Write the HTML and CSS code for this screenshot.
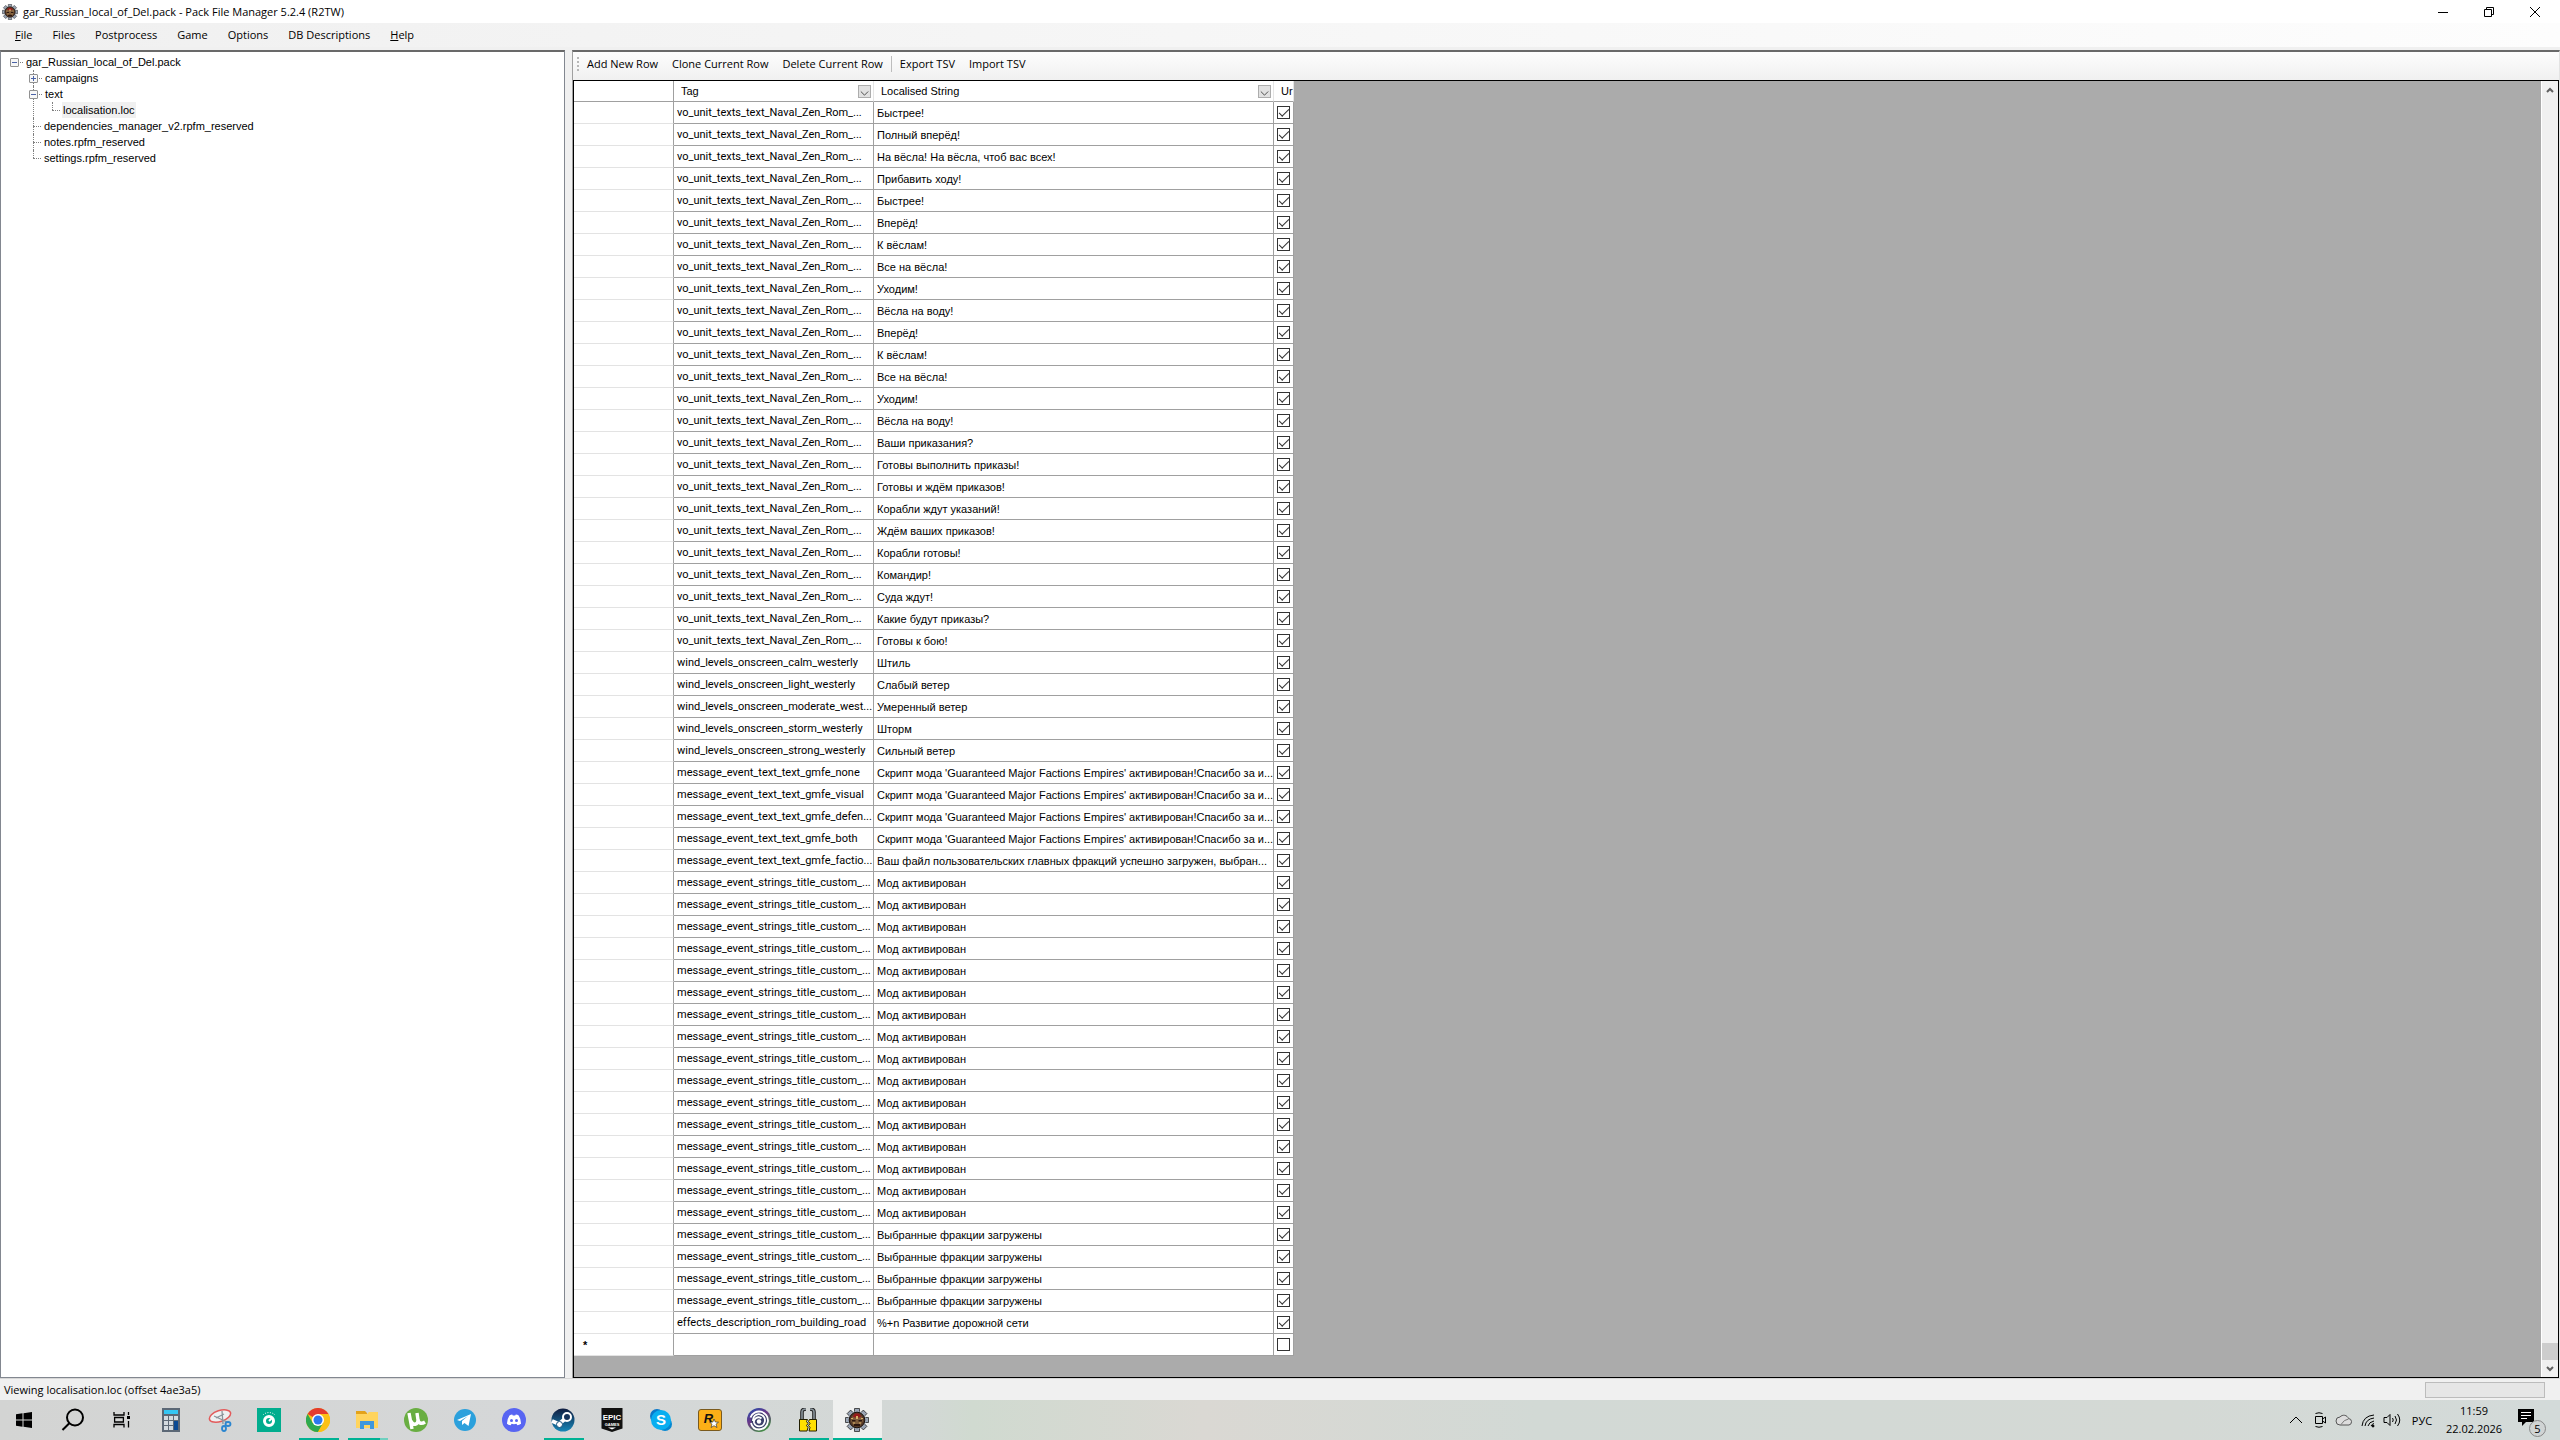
FILE: index.html
```html
<!DOCTYPE html>
<html lang="ru">
<head>
    <meta charset="UTF-8">
    <meta name="viewport" content="width=device-width, initial-scale=1.0">
    <title>Pack File Manager</title>
    <link rel="stylesheet" href="styles.css">
</head>
<body>

<!-- shared icons -->
<svg class="defs" width="0" height="0">
    <symbol id="gear" viewBox="0 0 24 24">
        <g fill="#9aa5b5" stroke="#2a2a2a" stroke-width=".8">
            <path d="M9.500.5h5v4h-5zM9.500 19.500h5v4h-5zM.5 9.500h4v5h-4zM19.500 9.500h4v5h-4z"/>
            <path d="M9.500.5h5v4h-5zM9.500 19.500h5v4h-5zM.5 9.500h4v5h-4zM19.500 9.500h4v5h-4z" transform="rotate(45 12 12)"/>
        </g>
        <circle cx="12" cy="12" r="9" fill="#9aa5b5"/>
        <circle cx="12" cy="12" r="7.800" fill="#553a28" stroke="#1c120c"/>
        <path d="M6 13l1.500-5L12 6l4.500 2 1.500 5-3 5H9z" fill="#7d5c3b"/>
        <path d="M7.500 8.500L10 5.500h4l2.500 3-2.500 1h-4z" fill="#961b1b"/>
        <path d="M7 12h3.500v1.500H7zM13.500 12H17v1.500h-3.500zM9 16h6v2H9z" fill="#2c170f"/>
        <path d="M11 8h2v3h-2zM6 10h2v1H6zM16 10h2v1h-2zM8 14.500h2v1H8zM14 14.500h2v1h-2z" fill="#d9b26a"/>
    </symbol>
</svg>

<div class="window">
    <header class="titlebar">
        <svg class="app-icon"><use href="#gear"/></svg>
        <span class="caption">gar_Russian_local_of_Del.pack - Pack File Manager 5.2.4 (R2TW)</span>
        <button class="win-btn" aria-label="Minimize"><svg viewBox="0 0 10 10"><path d="M0 5.500h10"/></svg></button>
        <button class="win-btn" aria-label="Restore"><svg viewBox="0 0 10 10"><path d="M.5 2.500h7v7h-7zM2.500 2.500v-2h7v7h-2"/></svg></button>
        <button class="win-btn" aria-label="Close"><svg viewBox="0 0 10 10"><path d="M0 0l10 10M10 0L0 10"/></svg></button>
    </header>

    <nav class="menu">
        <button><u>F</u>ile</button>
        <button>Files</button>
        <button>Postprocess</button>
        <button>Game</button>
        <button>Options</button>
        <button>DB Descriptions</button>
        <button><u>H</u>elp</button>
    </nav>

    <main class="panes">
        <aside class="tree">
            <ul class="root">
                <li><div class="node"><button class="toggle" aria-label="Collapse"></button><span>gar_Russian_local_of_Del.pack</span></div>
                    <ul>
                        <li><div class="node"><button class="toggle plus" aria-label="Expand"></button><span>campaigns</span></div></li>
                        <li><div class="node"><button class="toggle" aria-label="Collapse"></button><span>text</span></div>
                            <ul>
                                <li><div class="node leaf"><span class="selected">localisation.loc</span></div></li>
                            </ul>
                        </li>
                        <li><div class="node leaf"><span>dependencies_manager_v2.rpfm_reserved</span></div></li>
                        <li><div class="node leaf"><span>notes.rpfm_reserved</span></div></li>
                        <li><div class="node leaf"><span>settings.rpfm_reserved</span></div></li>
                    </ul>
                </li>
            </ul>
        </aside>

        <section class="editor">
            <div class="toolbar">
                <i class="grip"></i>
                <button>Add New Row</button>
                <button>Clone Current Row</button>
                <button>Delete Current Row</button>
                <i class="separator"></i>
                <button>Export TSV</button>
                <button>Import TSV</button>
            </div>
            <div class="grid">
                <div class="grid-area">
                    <table>
                        <colgroup><col class="col-head"><col class="col-tag"><col class="col-text"><col class="col-check"></colgroup>
                        <thead>
                            <tr>
                                <th></th>
                                <th><div class="th">Tag<button class="filter" aria-label="Filter Tag"><svg viewBox="0 0 12 12"><path d="M2 6l4 4 4-4"/></svg></button></div></th>
                                <th><div class="th">Localised String<button class="filter" aria-label="Filter Localised String"><svg viewBox="0 0 12 12"><path d="M2 6l4 4 4-4"/></svg></button></div></th>
                                <th><div class="th">Ur</div></th>
                            </tr>
                        </thead>
                        <tbody id="rows"></tbody>
                    </table>
                </div>
                <div class="scrollbar">
                    <button aria-label="Scroll up"><svg viewBox="0 0 8 6"><path d="M1 5l3-3 3 3"/></svg></button>
                    <div class="thumb"></div>
                    <button aria-label="Scroll down"><svg viewBox="0 0 8 6"><path d="M1 1l3 3 3-3"/></svg></button>
                </div>
            </div>
        </section>
    </main>

    <footer class="status">
        <span>Viewing localisation.loc (offset 4ae3a5)</span>
        <div class="progress"></div>
    </footer>
</div>

<div class="taskbar">
    <button class="task" aria-label="Start"><svg viewBox="0 0 24 24"><path d="M4 6.300l6.500-1v6.200H4zM11.500 5.200L20 4v7.500h-8.500zM4 12.500h6.500v6.200L4 17.800zM11.500 12.500H20V20l-8.500-1.200z"/></svg></button>
    <button class="task" aria-label="Search"><svg viewBox="0 0 24 24" fill="none" stroke="#000" stroke-width="2"><circle cx="14" cy="9.500" r="8"/><path d="M8.300 15.200L1.500 22"/></svg></button>
    <button class="task" aria-label="Task view"><svg viewBox="0 0 24 24" fill="none" stroke="#000" stroke-width="1.300"><path d="M4 4v3h10V4M4 19.500v-3h10v3M4.600 9.500h8.800v4.500H4.600zM18.500 4v3M18.500 13v6.500"/><path d="M17 8h3v3h-3z" fill="#000" stroke="none"/></svg></button>
    <button class="task" aria-label="Calculator"><svg viewBox="0 0 24 24"><path d="M3 0h18v24H3z" fill="#5c6876"/><path d="M5 2h14v4H5z" fill="#35c6f4"/><path d="M5 8h4v4H5zM10 8h4v4h-4zM15 8h4v4h-4zM5 13h4v4H5zM10 13h4v4h-4zM5 18h4v4H5zM10 18h4v4h-4z" fill="#d3dae0"/><path d="M15 13h4v9h-4z" fill="#0b4a94"/></svg></button>
    <button class="task" aria-label="Snipping tool"><svg viewBox="0 0 24 24" fill="none"><ellipse cx="12" cy="8" rx="11" ry="5.500" transform="rotate(-18 12 8)" fill="#eef0f1" stroke="#e25b5b" stroke-width="1.500"/><path d="M6 8l13 6M14 3l1 13M8 10l8-4" stroke="#8b949b" stroke-width="1.300"/><g stroke="#2b86d0" stroke-width="1.800"><ellipse cx="20" cy="16" rx="2.500" ry="2"/><ellipse cx="16" cy="20.500" rx="2" ry="2.500"/></g></svg></button>
    <button class="task" aria-label="Monitor"><svg viewBox="0 0 24 24" fill="none"><path d="M0 0h24v24H0z" fill="#00ad8e"/><circle cx="12" cy="13" r="4.500" stroke="#fff" stroke-width="3"/><path d="M12 13l3.500-3.500" stroke="#fff" stroke-width="2"/><path d="M6 7a8.500 8.500 0 0112 0" stroke="#fff" stroke-dasharray="1 1.500"/></svg></button>
    <button class="task open" aria-label="Chrome"><svg viewBox="0 0 24 24"><circle cx="12" cy="12" r="12" fill="#fbc116"/><path d="M12 12L1.600 6A12 12 0 0122.400 6z" fill="#e33b2e"/><path d="M1.600 6A12 12 0 0012 24l5.200-9-10.400 0z" fill="#2da94f"/><path d="M12 6h10.400A12 12 0 0112 24l5.200-9z" fill="#fbc116"/><circle cx="12" cy="12" r="6" fill="#fff"/><circle cx="12" cy="12" r="4.500" fill="#2b78ee"/></svg></button>
    <button class="task open stacked" aria-label="Explorer"><svg viewBox="0 0 24 24"><path d="M1 3h9l2 2v4H1z" fill="#e3a21a"/><path d="M1 6h11l2-2h9v16H1z" fill="#ffd45e"/><path d="M5 21v-8h14v8h-4v-4H9v4z" fill="#3f97dd"/></svg></button>
    <button class="task" aria-label="uTorrent"><svg viewBox="0 0 24 24" fill="none"><circle cx="12" cy="12" r="12" fill="#69ae42"/><path d="M5 5l3 16M7 13c2 5 7 4 7-1l-1-7M14 12c1 4 4 4 7 2" stroke="#fff" stroke-width="3.400"/></svg></button>
    <button class="task" aria-label="Telegram"><svg viewBox="0 0 24 24"><circle cx="12" cy="12" r="11" fill="#2ba0dc"/><path d="M4 12l14-6-2.500 12-4-3-2.500 2v-4l6-5-8 5z" fill="#fff"/></svg></button>
    <button class="task" aria-label="Discord"><svg viewBox="0 0 24 24"><circle cx="12" cy="12" r="12" fill="#5865f2"/><path d="M7.500 7.500Q9 6.700 10.200 6.600l.6 1h2.400l.6-1q1.700.2 2.900.9 2.400 3.800 2.300 8.200-1.700 1.300-3.600 1.600l-1-1.500q-2.400.7-4.800 0l-1 1.500Q6.600 17 5 15.700 4.900 11.300 7.500 7.500z" fill="#fff"/><circle cx="9.500" cy="12.500" r="1.500" fill="#5865f2"/><circle cx="14.500" cy="12.500" r="1.500" fill="#5865f2"/></svg></button>
    <button class="task open" aria-label="Steam"><svg viewBox="0 0 24 24" fill="none"><defs><linearGradient id="steam" x2="0" y2="1"><stop stop-color="#111d40"/><stop offset="1" stop-color="#1687b8"/></linearGradient></defs><circle cx="12" cy="12" r="11.500" fill="url(#steam)"/><path d="M1 13l7 3 7-6" stroke="#fff" stroke-width="4"/><circle cx="8.500" cy="16.500" r="3" fill="#fff" stroke="#17527c"/><circle cx="16" cy="9" r="4" fill="#16335a" stroke="#fff" stroke-width="2"/></svg></button>
    <button class="task" aria-label="Epic Games"><svg viewBox="0 0 24 24"><path d="M1.500 0h21v20.500L12 24 1.500 20.500z" fill="#111"/><text x="12" y="12" class="epic">EPIC</text><text x="12" y="18" class="epic-sub">GAMES</text><path d="M8 19.500h8l-4 2z" fill="#fff"/></svg></button>
    <button class="task" aria-label="Skype"><svg viewBox="0 0 24 24"><circle cx="8" cy="8" r="7" fill="#0878c9"/><circle cx="16" cy="16" r="7" fill="#0587d1"/><circle cx="12" cy="12" r="10" fill="#08aef0"/><text x="12" y="17" class="skype">S</text></svg></button>
    <button class="task" aria-label="Rockstar Games"><svg viewBox="0 0 24 24"><rect x=".5" y="1.500" width="23" height="21" rx="2.500" fill="#fcaf17" stroke="#7a5a1d"/><text x="10.500" y="14.500" class="rockstar">R</text><path d="M16 11l1.300 3 3.200.2-2.500 2 1 3.300-3-1.800-2.900 1.800.9-3.300-2.300-2 3.200-.2z" fill="#fff" stroke="#222" stroke-width=".6"/></svg></button>
    <button class="task" aria-label="Ubisoft Connect"><svg viewBox="0 0 24 24" fill="none"><defs><linearGradient id="ubi" x1=".2" x2=".8" y2="1"><stop stop-color="#2b4aa8"/><stop offset=".4" stop-color="#6b3788"/><stop offset="1" stop-color="#3d9a3a"/></linearGradient></defs><circle cx="12" cy="12" r="12" fill="url(#ubi)"/><circle cx="12" cy="12.500" r="8" fill="#3b3f6b"/><path d="M3.500 9.500A9 9 0 1112 21.500 8.500 8.500 0 014 15" stroke="#fff" stroke-width="1.800"/><path d="M6 13a6 6 0 1111.500 1.500A5.500 5.500 0 017 14.500a4.500 4.500 0 017.500-4" stroke="#fff" stroke-width="1.800"/><circle cx="12" cy="13.500" r="2.200" fill="#fff"/></svg></button>
    <button class="task open" aria-label="Archiver"><svg viewBox="0 0 24 24" fill="none"><path d="M6 12V4q0-3 4-3M18 12V4q0-3-4-3" stroke="#222" stroke-width="3.600"/><path d="M6 12V4q0-3 4-3M18 12V4q0-3-4-3" stroke="#8b969c" stroke-width="1.600"/><path d="M3.500 11.500h8l-1 2 1.500 2-1.500 2 1.500 2-1 3.500H3.500zM20.500 11.500h-7l-1 2 1.500 2-1.500 2 1.500 2-1 3.500h7.500z" fill="#ffe000" stroke="#221f00"/></svg></button>
    <button class="task open active" aria-label="Pack File Manager"><svg viewBox="0 0 24 24"><use href="#gear"/></svg></button>

    <div class="tray">
        <button aria-label="Show hidden icons"><svg viewBox="0 0 16 16"><path d="M2 11l6-6 6 6"/></svg></button>
        <button aria-label="Meet now"><svg viewBox="0 0 16 16"><path d="M3.500 4.500h7v7h-7zM10.500 7l3-2v6l-3-2M3.500 1.500q3.500-1.500 7 0M3.500 14.500q3.500 1.500 7 0"/></svg></button>
        <button class="wide" aria-label="OneDrive"><svg viewBox="0 0 18 16"><path d="M5 13a4 4 0 010-8 5 5 0 018.500 1.500A3.300 3.300 0 0114 13z" fill="#ddd" stroke="#555"/><path d="M6 12.500q3-5 7.500-5.500" stroke="#777"/></svg></button>
        <button aria-label="Network"><svg viewBox="0 0 16 16"><path d="M2 14Q3 4 14 3M5 14q1-7 9-8M8 14q1-4 6-5M11 14q1-2 3-2.500"/><circle cx="13" cy="14" r="1" fill="#000"/></svg></button>
        <button class="wide" aria-label="Volume"><svg viewBox="0 0 18 16"><path d="M1 5.500h3l3-3v11l-3-3H1zM9.500 6q1.500 2 0 4M12 4q3 4 0 8M14.500 2q4.500 6 0 12"/></svg></button>
        <button class="lang">РУС</button>
        <div class="clock"><span>11:59</span><span>22.02.2026</span></div>
        <button class="notify" aria-label="Notifications"><svg viewBox="0 0 26 26"><path d="M1 2h16v13H9l-4 4v-4H1z" fill="#000" stroke="none"/><path d="M4 5.500h10M4 8.500h10M4 11.500h6" stroke="#fff"/></svg><span class="badge">5</span></button>
    </div>
</div>

<script src="rows.js"></script>
</body>
</html>
```

FILE: styles.css
```css
* {
    box-sizing: border-box;
}
body {
    margin: 0;
    height: 100vh;
    display: flex;
    flex-direction: column;
    overflow: hidden;
    background: #f0f0f0;
    color: #000;
    font-family: "Open Sans", "Noto Sans", sans-serif;
    font-size: 11px;
}
button {
    margin: 0;
    padding: 0;
    border: 0;
    background: none;
    color: inherit;
    font: inherit;
    white-space: nowrap;
}
ul {
    margin: 0;
    padding: 0;
    list-style: none;
}
.defs {
    position: absolute;
}
.window {
    flex: 1;
    min-height: 0;
    display: flex;
    flex-direction: column;
}

/* title bar */
.titlebar {
    height: 23px;
    display: flex;
    align-items: center;
    padding-right: 2px;
    background: #fff;
}
.app-icon {
    width: 16px;
    height: 16px;
    margin: 0 5px 0 2px;
}
.caption {
    flex: 1;
}
.win-btn {
    width: 46px;
    height: 20px;
}
.win-btn svg {
    display: block;
    width: 10px;
    height: 10px;
    margin: auto;
    overflow: visible;
    fill: none;
    stroke: #000;
}

/* menu */
.menu {
    height: 27px;
    display: flex;
    align-items: flex-start;
    padding-left: 5px;
    background: linear-gradient(to right, #f0f0f0, #fdfdfd) no-repeat;
    background-size: 100% 24px;
}
.menu button {
    height: 22px;
    padding: 0 10px;
}

/* panes */
.panes {
    flex: 1;
    min-height: 0;
    display: flex;
    gap: 7px;
}
.tree {
    width: 565px;
    padding-top: 2px;
    border: 1px solid #828790;
    border-top: 2px solid #696969;
    background: #fff;
    font-family: "Liberation Sans", Arial, sans-serif;
}
.node {
    display: flex;
    align-items: center;
    height: 16px;
}
.node::before {
    content: "";
    width: 3px;
    border-top: 1px dotted #808080;
    order: 1;
}
.node span {
    order: 2;
    line-height: 16px;
    margin-left: 2px;
    padding: 0 1px;
}
.leaf::before {
    width: 8px;
}
.root > li > .node {
    padding-left: 9px;
}
.root ul {
    margin-left: 32px;
}
.root ul ul {
    margin-left: 19px;
}
.root ul li {
    position: relative;
}
.root ul li::before {
    content: "";
    position: absolute;
    left: 0;
    top: 0;
    height: 100%;
    border-left: 1px dotted #808080;
}
.root ul li:last-child::before {
    height: 8px;
}
.root ul .toggle {
    position: relative;
    margin-left: -4px;
}
.toggle {
    width: 9px;
    height: 9px;
    margin-right: 1px;
    border: 1px solid #919191;
    border-radius: 1px;
    background: linear-gradient(#4b63a7, #4b63a7) center / 5px 1px no-repeat #f7f7f7;
}
.toggle.plus {
    background: linear-gradient(#4b63a7, #4b63a7) center / 5px 1px no-repeat, linear-gradient(#4b63a7, #4b63a7) center / 1px 5px no-repeat #f7f7f7;
}
.node .selected {
    background: #f0f0f0;
}

/* editor */
.editor {
    flex: 1;
    min-width: 0;
    display: flex;
    flex-direction: column;
    border-top: 2px solid #696969;
    border-left: 1px solid #a0a0a0;
    border-right: 1px solid #e3e3e3;
}
.toolbar {
    height: 28px;
    display: flex;
    padding-left: 4px;
    background: linear-gradient(#fdfdfd, #f0f0f0);
}
.toolbar button {
    height: 22px;
    padding: 0 7px;
}
.grip {
    width: 2px;
    height: 14px;
    margin: 5px 1px 0 0;
    background: repeating-linear-gradient(#b8b8b8 0 2px, transparent 2px 4px);
}
.separator {
    width: 1px;
    height: 16px;
    margin: 4px 1px;
    background: #bdbdbd;
}
.grid {
    flex: 1;
    min-height: 0;
    display: flex;
    border: 1px solid #000;
    background: #ababab;
    font-family: "Liberation Sans", Arial, sans-serif;
}
.grid-area {
    flex: 1;
    min-width: 0;
    overflow: hidden;
}
table {
    width: 720px;
    table-layout: fixed;
    border-collapse: separate;
    border-spacing: 0;
    background: #fff;
}
.col-head {
    width: 100px;
}
.col-tag {
    width: 200px;
}
.col-text {
    width: 400px;
}
.col-check {
    width: 20px;
}
th, td {
    height: 22px;
    padding: 0 0 0 3px;
    border-right: 1px solid #a0a0a0;
    border-bottom: 1px solid #a0a0a0;
    font-weight: normal;
    text-align: left;
    white-space: nowrap;
    overflow: hidden;
}
.tag {
    font-family: Roboto, sans-serif;
}
thead th {
    height: 21px;
    padding-left: 7px;
    border-right-color: #e5e5e5;
}
thead th:first-child {
    border-right-color: #a0a0a0;
}
tbody th {
    padding-left: 9px;
    border-bottom-color: #e3e3e3;
    font-weight: bold;
}
.th {
    display: flex;
    align-items: center;
    justify-content: space-between;
    padding-right: 2px;
}
.filter {
    width: 13px;
    height: 13px;
    border: 1px solid #adadad;
    background: #e1e1e1;
}
.filter svg {
    display: block;
    width: 11px;
    height: 11px;
    fill: none;
    stroke: #444;
}
.check {
    appearance: none;
    display: block;
    width: 13px;
    height: 13px;
    margin: 0;
    border: 1px solid #333;
    background: #fff;
}
.check:checked::before {
    content: "";
    display: block;
    width: 9px;
    height: 4px;
    margin: 2px 0 0 1px;
    border-left: 1px solid #333;
    border-bottom: 1px solid #333;
    transform: rotate(-45deg);
}
.scrollbar {
    width: 17px;
    display: flex;
    flex-direction: column;
    border-left: 1px solid #fff;
    background: #f0f0f0;
}
.scrollbar button {
    height: 17px;
}
.scrollbar svg {
    display: block;
    width: 8px;
    height: 6px;
    margin: auto;
    fill: none;
    stroke: #606060;
    stroke-width: 2;
}
.thumb {
    height: 17px;
    margin-top: auto;
    background: #cdcdcd;
}

/* status */
.status {
    height: 22px;
    display: flex;
    align-items: center;
    justify-content: space-between;
    padding: 0 15px 0 4px;
    border-top: 1px solid #d7d7d7;
}
.progress {
    width: 120px;
    height: 16px;
    border: 1px solid #bcbcbc;
    background: #e6e6e6;
}

/* taskbar */
.taskbar {
    height: 40px;
    display: flex;
    background: linear-gradient(to right, #d3d4d3, #d5d7d8 20%, #d3d8d6 36%, #d0dad0 38%, #dad8d3 47%, #d2d9d5 60%, #d4d9d5 85%, #d3dad9);
}
.task {
    width: 49px;
    height: 40px;
    padding-right: 1px;
}
.task svg {
    display: block;
    width: 24px;
    height: 24px;
    margin: auto;
}
.task.open {
    background: linear-gradient(#00b294, #00b294) center bottom / 40px 2px no-repeat;
}
.task.stacked {
    background: linear-gradient(to right, #00b294 32px, #6fd0bf 32px) center bottom / 40px 2px no-repeat;
}
.task.active {
    background: linear-gradient(#00b294, #00b294) bottom / 100% 2px no-repeat #eff0ef;
}
.epic, .epic-sub, .skype, .rockstar {
    text-anchor: middle;
    font-family: "Liberation Sans", Arial, sans-serif;
    font-weight: bold;
    fill: #fff;
}
.epic {
    font-size: 8px;
}
.epic-sub {
    font-size: 4px;
}
.skype {
    font-size: 15px;
}
.rockstar {
    font-size: 13px;
    font-style: italic;
    fill: #111;
}
.tray {
    display: flex;
    align-items: center;
    margin-left: auto;
    padding-right: 8px;
}
.tray button {
    width: 24px;
    height: 40px;
}
.tray svg {
    display: block;
    width: 16px;
    height: 16px;
    margin: auto;
    fill: none;
    stroke: #000;
}
.tray .wide svg {
    width: 18px;
}
.tray .lang {
    width: 36px;
}
.clock {
    width: 68px;
    display: flex;
    flex-direction: column;
    align-items: center;
    line-height: 18px;
}
.tray .notify {
    width: 44px;
    position: relative;
}
.tray .notify svg {
    width: 26px;
    height: 26px;
}
.badge {
    position: absolute;
    right: 6px;
    bottom: 3px;
    width: 17px;
    height: 17px;
    border: 1px solid #888;
    border-radius: 50%;
    background: #d0d4d4;
    line-height: 15px;
}
```

FILE: rows.js
```js
const naval = 'vo_unit_texts_text_Naval_Zen_Rom_...';
const custom = 'message_event_strings_title_custom_...';
const script = "Скрипт мода 'Guaranteed Major Factions Empires' активирован!Спасибо за и...";

const navalTexts = [
    'Быстрее!', 'Полный вперёд!', 'На вёсла! На вёсла, чтоб вас всех!', 'Прибавить ходу!', 'Быстрее!',
    'Вперёд!', 'К вёслам!', 'Все на вёсла!', 'Уходим!', 'Вёсла на воду!',
    'Вперёд!', 'К вёслам!', 'Все на вёсла!', 'Уходим!', 'Вёсла на воду!',
    'Ваши приказания?', 'Готовы выполнить приказы!', 'Готовы и ждём приказов!', 'Корабли ждут указаний!',
    'Ждём ваших приказов!', 'Корабли готовы!', 'Командир!', 'Суда ждут!', 'Какие будут приказы?', 'Готовы к бою!'
];

const rows = [
    ...navalTexts.map(text => [naval, text]),
    ['wind_levels_onscreen_calm_westerly', 'Штиль'],
    ['wind_levels_onscreen_light_westerly', 'Слабый ветер'],
    ['wind_levels_onscreen_moderate_west...', 'Умеренный ветер'],
    ['wind_levels_onscreen_storm_westerly', 'Шторм'],
    ['wind_levels_onscreen_strong_westerly', 'Сильный ветер'],
    ['message_event_text_text_gmfe_none', script],
    ['message_event_text_text_gmfe_visual', script],
    ['message_event_text_text_gmfe_defen...', script],
    ['message_event_text_text_gmfe_both', script],
    ['message_event_text_text_gmfe_factio...', 'Ваш файл пользовательских главных фракций успешно загружен, выбран...'],
    ...Array(16).fill([custom, 'Мод активирован']),
    ...Array(4).fill([custom, 'Выбранные фракции загружены']),
    ['effects_description_rom_building_road', '%+n Развитие дорожной сети']
];

const tbody = document.getElementById('rows');

function addRow(head, tag, text, checked) {
    const row = document.createElement('tr');
    row.innerHTML = `<th>${head}</th><td class="tag">${tag}</td><td>${text}</td>
        <td><input type="checkbox" class="check" aria-label="Ur" ${checked ? 'checked' : ''}></td>`;
    tbody.appendChild(row);
}

rows.forEach(([tag, text]) => addRow('', tag, text, true));
// пустая строка для новой записи
addRow('*', '', '', false);
```
